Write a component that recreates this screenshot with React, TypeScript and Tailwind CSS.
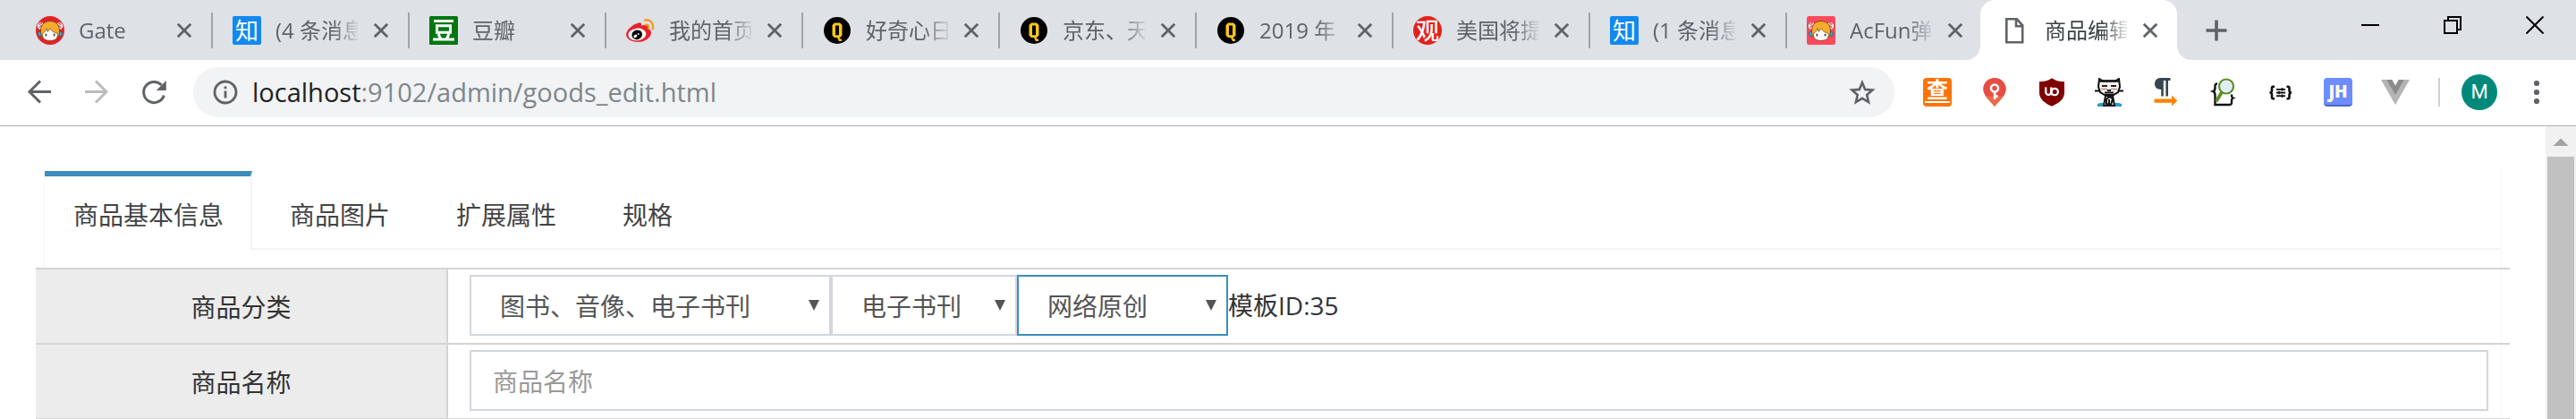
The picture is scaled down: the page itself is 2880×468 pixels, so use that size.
import { useState } from 'react';
import type { ReactNode } from 'react';

function Mascot({ round }: { round?: boolean }) {
  return (
    <svg viewBox="0 0 32 32" className="size-8" aria-hidden="true">
      {round ? <circle cx="16" cy="16" r="16" fill="#e32226" /> : <rect width="32" height="32" rx="2.5" fill="#fb4a5c" />}
      <circle cx="5.5" cy="11" r="4.2" fill="#fff" stroke="#9b3b3b" strokeWidth=".8" />
      <circle cx="26.5" cy="11" r="4.2" fill="#fff" stroke="#9b3b3b" strokeWidth=".8" />
      <path d="M3.4 9.5l3.4-1.6M3.6 13l3-3M28.6 9.5l-3.4-1.6M28.4 13l-3-3" stroke="#f25468" strokeWidth="1.5" />
      <path d="M2 18.5l3.6-1.5 2.2 4-4 2zM30 18.5L26.4 17l-2.2 4 4 2z" fill="#39a9cf" stroke="#2b5a70" strokeWidth=".7" />
      <path d="M5.6 19C4.6 10.500 9 5.600 16 5.600S27.400 10.500 26.400 19c-.3 2.500-1.500 4-2.400 4.600H8C7 23 5.900 21.500 5.600 19z" fill="#f6ab2c" stroke="#6d4518" strokeWidth=".9" />
      <path d="M7.600 19.500c2-.8 3.800-3.300 4.400-5.700l1.400 3.700 2.400-3.700c1.400 2.500 4.800 5 8.600 5.700.3 5-2 7.800-8.400 7.800s-8.800-2.800-8.400-7.800z" fill="#fff" stroke="#6d4518" strokeWidth=".7" />
      <ellipse cx="11.400" cy="21" rx=".9" ry="1.500" fill="#3a2a22" />
      <ellipse cx="20.600" cy="21" rx=".9" ry="1.500" fill="#3a2a22" />
    </svg>
  );
}

function Zhihu() {
  return <span className="flex size-8 items-center justify-center rounded-xs bg-[#1289ee] text-[26px] leading-8 text-white">知</span>;
}

function Douban() {
  return (
    <svg viewBox="0 0 32 32" className="size-8" aria-hidden="true">
      <rect width="32" height="32" rx="1.500" fill="#007711" />
      <g fill="none" stroke="#fff" strokeWidth="3">
        <path d="M5 5.500h22M4 26h24M8.500 10.700h15v7.600h-15zM10 20l2.500 5M22 20l-2.500 5" />
      </g>
    </svg>
  );
}

function Weibo() {
  return (
    <svg viewBox="0 0 32 32" className="size-8" aria-hidden="true">
      <path d="M13 8c2-1.500 4.600-1 4 2.800 4-1.800 8-1.500 7.400 2.200-.2 1 .1 1.300 1 1.700 3 1.200 3.300 4.400 1.600 7.200C24.800 26 19.500 28.800 13 28.800 6 28.800 0 25.500 0 20.500 0 15.800 8 8.500 13 8z" fill="#e6222d" />
      <ellipse cx="12.400" cy="20.400" rx="10" ry="6.800" fill="#fff" transform="rotate(-6 12.400 20.400)" />
      <ellipse cx="12.200" cy="20.800" rx="5.900" ry="5.300" fill="#000" transform="rotate(-15 12.200 20.800)" />
      <ellipse cx="10.400" cy="22.400" rx="2.100" ry="1.700" fill="#fff" transform="rotate(-30 10.400 22.400)" />
      <circle cx="13.700" cy="20" r=".9" fill="#fff" />
      <path d="M21 4.500c5.500-1.400 10.500 3.500 8.700 10M21.500 9.800c2.500-.7 4.400 1.300 3.700 3.900" fill="none" stroke="#f29a1c" strokeWidth="2.300" strokeLinecap="round" />
    </svg>
  );
}

function Curiosity() {
  return (
    <svg viewBox="0 0 32 32" className="size-8" aria-hidden="true">
      <circle cx="16" cy="16" r="15" fill="#000" />
      <path fillRule="evenodd" fill="#fbc71c" d="M13 7.500h6l2.500 2.500v11.500L19 24h-.6l.8 1.600h1.800V28h-3l-2-4H13l-2.500-2.500V10zM14 10.500v10.700h4V10.500z" />
    </svg>
  );
}

function Seal() {
  return <span className="flex size-8 items-center justify-center rounded-full bg-[#e3211b] text-[26px] leading-8 font-medium text-white">观</span>;
}

function Page() {
  return (
    <svg viewBox="0 0 32 32" className="size-8" aria-hidden="true" fill="none" stroke="#5f6368" strokeWidth="2.600">
      <path d="M5.300 3.300h11.500l6.400 7v19H5.300zM16 3.500v7.700h7" />
    </svg>
  );
}

const tabs: { title: string; icon: ReactNode }[] = [
  { title: 'Gate', icon: <Mascot round /> },
  { title: '(4 条消息', icon: <Zhihu /> },
  { title: '豆瓣', icon: <Douban /> },
  { title: '我的首页', icon: <Weibo /> },
  { title: '好奇心日', icon: <Curiosity /> },
  { title: '京东、天', icon: <Curiosity /> },
  { title: '2019 年', icon: <Curiosity /> },
  { title: '美国将提', icon: <Seal /> },
  { title: '(1 条消息', icon: <Zhihu /> },
  { title: 'AcFun弹', icon: <Mascot /> },
  { title: '商品编辑', icon: <Page /> },
];

function TabStrip() {
  const last = tabs.length - 1;
  return (
    <header className="flex h-[67px] bg-[#dee1e6] pl-[18px]">
      {tabs.map((tab, i) => (
        <div
          key={tab.title}
          className={
            i === last
              ? 'relative -ml-1 flex min-w-0 shrink basis-[220px] items-center rounded-t-2xl bg-white pl-6'
              : 'flex min-w-0 shrink basis-[220px] items-center pl-[22px]'
          }
        >
          {i === last && (
            <>
              <svg viewBox="0 0 16 16" className="absolute bottom-0 -left-4 size-4" aria-hidden="true"><path d="M16 0v16H0A16 16 0 0 0 16 0z" fill="#fff" /></svg>
              <svg viewBox="0 0 16 16" className="absolute -right-4 bottom-0 size-4" aria-hidden="true"><path d="M0 0v16h16A16 16 0 0 1 0 0z" fill="#fff" /></svg>
            </>
          )}
          <button type="button" className="flex min-w-0 items-center gap-4">
            <span className="shrink-0">{tab.icon}</span>
            <span
              className={`w-[92px] min-w-0 overflow-hidden text-left text-[24px] leading-8 whitespace-nowrap [mask-image:linear-gradient(to_right,#000_64px,transparent_96px)] ${
                i === last ? 'text-[#3c4043]' : 'text-[#5f6368]'
              }`}
            >
              {tab.title}
            </span>
          </button>
          <button type="button" aria-label="关闭标签页" className="ml-[18px] shrink-0">
            <svg viewBox="0 0 16 16" className="size-4" stroke="#5f6368" strokeWidth="2.800"><path d="M.8.8l14.400 14.400M15.200.8L.8 15.200" /></svg>
          </button>
          {i < last - 1 && <span className="ml-auto h-10 w-0.5 shrink-0 bg-[#a0a4a9]" />}
        </div>
      ))}
      <button type="button" aria-label="新标签页" className="ml-7 flex w-8 shrink-0 items-center justify-center">
        <svg viewBox="0 0 24 24" className="size-6" stroke="#5f6368" strokeWidth="3.600"><path d="M12 .5v23M.5 12h23" /></svg>
      </button>
      <div className="ml-auto flex h-14 shrink-0">
        <button type="button" aria-label="最小化" className="flex w-[92px] items-center justify-center">
          <svg viewBox="0 0 20 20" className="size-5"><path d="M0 9h20v2H0z" /></svg>
        </button>
        <button type="button" aria-label="还原" className="flex w-[92px] items-center justify-center">
          <svg viewBox="0 0 20 20" className="size-5" fill="none" stroke="#000" strokeWidth="2"><path d="M1 5h14v14H1zM5 5V1h14v14h-4" /></svg>
        </button>
        <button type="button" aria-label="关闭" className="flex w-[92px] items-center justify-center">
          <svg viewBox="0 0 20 20" className="size-5" stroke="#000" strokeWidth="2"><path d="M.5.5l19 19M19.500.5l-19 19" /></svg>
        </button>
      </div>
    </header>
  );
}

function Ext({ label, children }: { label: string; children: ReactNode }) {
  return (
    <button type="button" aria-label={label} className="flex size-8 shrink-0 items-center justify-center">
      {children}
    </button>
  );
}

function Toolbar() {
  return (
    <div className="flex items-center border-b border-[#b1b1b1] bg-white pt-2 pr-7 pb-[9px] pl-7">
      <div className="flex shrink-0 gap-8">
        <Ext label="后退">
          <svg viewBox="0 0 32 32" className="size-8" fill="none" stroke="#5f6368" strokeWidth="3"><path d="M29 15.500H5M17 3.500L5 15.500l12 12" /></svg>
        </Ext>
        <Ext label="前进">
          <svg viewBox="0 0 32 32" className="size-8" fill="none" stroke="#babcbe" strokeWidth="3"><path d="M3 15.500h24M15 3.500l12 12-12 12" /></svg>
        </Ext>
        <Ext label="重新加载">
          <svg viewBox="0 0 32 32" className="size-8"><path d="M27.300 19.500A11.600 11.600 0 1 1 24.500 7.900" fill="none" stroke="#5f6368" strokeWidth="3" /><path d="M29.800 3v11H18.800z" fill="#5f6368" /></svg>
        </Ext>
      </div>
      <div className="ml-7 flex h-14 min-w-0 flex-1 items-center rounded-full bg-[#f1f3f4] pr-[21px] pl-[22px]">
        <svg viewBox="0 0 28 28" className="size-7 shrink-0" aria-hidden="true">
          <circle cx="14" cy="14" r="12" fill="none" stroke="#5f6368" strokeWidth="2.800" />
          <path d="M12.600 12.500h2.800v8h-2.800zM12.600 7.500h2.800v2.800h-2.800z" fill="#5f6368" />
        </svg>
        <p className="ml-4 flex-1 truncate text-[29px] leading-10 text-[#80868b]">
          <span className="text-[#202124]">localhost</span>:9102/admin/goods_edit.html
        </p>
        <button type="button" aria-label="为此网页添加书签" className="shrink-0">
          <svg viewBox="0 0 30 30" className="size-[30px]" fill="none" stroke="#5f6368" strokeWidth="2.600"><path d="M15 4.200l3.200 7.700 8.300.7-6.300 5.400 1.900 8.100L15 21.800l-7.100 4.300 1.900-8.100-6.300-5.400 8.300-.7z" /></svg>
        </button>
      </div>
      <div className="ml-8 flex shrink-0 gap-8">
        <Ext label="查词">
          <span className="flex size-8 flex-col items-center rounded-sm bg-[#ff7400] text-[24px] leading-[26px] font-bold text-white">
            查
            <span className="h-0.5 w-7 bg-white" />
          </span>
        </Ext>
        <Ext label="密钥">
          <svg viewBox="0 0 32 32" className="size-8">
            <path d="M16 0c7.200 0 12.800 5.500 12.800 12.600C28.800 20 21 25.500 16 32 11 25.500 3.200 20 3.200 12.600 3.200 5.500 8.800 0 16 0z" fill="#e84c42" />
            <path d="M6 20.500c2.800 3.800 6.800 7.300 10 11.500 3.200-4.200 7.200-7.700 10-11.500z" fill="#e96a4b" />
            <circle cx="16" cy="11.500" r="4" fill="none" stroke="#fff" strokeWidth="2.600" />
            <path d="M14.800 15h2.600v9h-2.600zM17 19h2.500v3H17z" fill="#fff" />
          </svg>
        </Ext>
        <Ext label="uBlock">
          <svg viewBox="0 0 32 32" className="size-8">
            <path d="M16 .3c4.500 3 9 4 14 4v12C30 24 24 28 16 31.800 8 28 2 24 2 16.300v-12c5 0 9.500-1 14-4z" fill="#800000" />
            <g fill="none" stroke="#fff" strokeWidth="2.300"><path d="M9.200 10.500v5.300a3 3 0 0 0 6 0v-5.300M15.200 15.800v3.500" /><circle cx="19.200" cy="15.500" r="3.700" /></g>
          </svg>
        </Ext>
        <Ext label="猫">
          <svg viewBox="0 0 32 32" className="size-8">
            <path d="M3 29c4-2 22-2 27 0v3H3z" fill="#2c9ccf" />
            <path d="M5 1l4 2.500h14l4-2.500 1 9-2 6-5 3H11l-5-3-2-6z" fill="#f6f2ef" stroke="#111" strokeWidth="2" />
            <path d="M5 3.500h22" stroke="#111" strokeWidth="2.400" />
            <path d="M8 9h6M18 9h6" stroke="#222" strokeWidth="2" />
            <path d="M7 12.500h7M18 12.500h7" stroke="#c88" strokeWidth="1.500" />
            <path d="M0 14.500h6M26 14.500h6M11 16.500h10M14 14h4" stroke="#111" strokeWidth="2" />
            <path d="M12 20l-2 11h12l-2-11z" fill="#fff" stroke="#111" strokeWidth="2" />
            <path d="M13 24l3-3 4 2-2 7-5-1zM16 24v5" fill="none" stroke="#111" strokeWidth="2" />
          </svg>
        </Ext>
        <Ext label="段落">
          <svg viewBox="0 0 32 32" className="size-8">
            <path d="M20.500 0v3H18v17.500h-2.600V3h-2.600v17.500h-2.600V13C5.500 13 3 10.500 3 6.600 3 2.600 5.800 0 10 0z" fill="#37474f" />
            <path d="M2.500 23.600H22v-4L28.300 25.500 22 31.500v-3.700H2.500z" fill="#ff8200" />
          </svg>
        </Ext>
        <Ext label="JSON 查看">
          <svg viewBox="0 0 32 32" className="size-8">
            <path d="M9 6.500c-3 0-2.500 2-2.500 4 0 3-.5 4-2 4.500 1.500.5 2 2 2 5v10h16c3 0 2.500-2 2.500-4 0-2 .2-3 1.500-3.500-1.300-.5-1.500-2-1.500-4" fill="none" stroke="#111" strokeWidth="2.400" />
            <path d="M14 16l-5.500 9" stroke="#5b8f1f" strokeWidth="3.800" strokeLinecap="round" />
            <circle cx="19" cy="9.500" r="8" fill="#e3edfa" stroke="#5c8f23" strokeWidth="2.200" />
          </svg>
        </Ext>
        <Ext label="JSON 编辑">
          <svg viewBox="0 0 32 32" className="size-8" fill="none" stroke="#111" strokeWidth="2.600">
            <path d="M9 9.800H7.500c-1 0-1.500.6-1.500 1.600v2.800c0 1.400-.8 2.300-2.500 2.300C5.200 16.500 6 17.400 6 18.800v2.800c0 1 .5 1.600 1.500 1.600H9M22.500 9.800H24c1 0 1.500.6 1.500 1.600v2.800c0 1.400.8 2.300 2.500 2.300-1.700 0-2.500.9-2.500 2.300v2.800c0 1-.5 1.600-1.500 1.600h-1.500" />
            <path d="M11 12.800h10M11 16.500h10M11 20.200h10" strokeWidth="1.800" />
            <path d="M17.500 11v3.600M14 14.700v3.600M17.500 18.400V22" strokeWidth="1.600" />
          </svg>
        </Ext>
        <Ext label="JSON Handle">
          <span className="flex size-8 items-center justify-center rounded-sm border-b-2 border-[#4a66c4] bg-[#6c8cff] text-[19px] leading-7 font-extrabold text-[#fffbe6]">JH</span>
        </Ext>
        <Ext label="Vue">
          <svg viewBox="0 0 32 32" className="size-8">
            <path d="M0 2h32L16 30z" fill="#b4b4b4" />
            <path d="M6.300 2h19.400L16 19z" fill="#8c8c8c" />
            <path d="M12.300 2h7.400L16 8.400z" fill="#fff" />
          </svg>
        </Ext>
      </div>
      <span className="ml-8 h-8 w-0.5 shrink-0 bg-[#cdcfd2]" />
      <button type="button" className="ml-6 size-10 shrink-0 rounded-full bg-[#00897b] text-center font-[Roboto,sans-serif] text-[22px] leading-10 text-white">M</button>
      <button type="button" aria-label="菜单" className="ml-7 flex h-8 w-8 shrink-0 items-center justify-center">
        <svg viewBox="0 0 32 32" className="size-8" fill="#5f6368"><circle cx="16" cy="6" r="3.100" /><circle cx="16" cy="16" r="3.100" /><circle cx="16" cy="26" r="3.100" /></svg>
      </button>
    </div>
  );
}

function Select({ id, label, option, widthClass, active }: { id: string; label: string; option: string; widthClass: string; active?: boolean }) {
  return (
    <div className={`relative ${widthClass}`}>
      <select
        id={id}
        aria-label={label}
        className={`h-[68px] w-full appearance-none border-2 bg-white pt-0.5 pr-10 pl-8 text-[28px] leading-10 text-[#555] outline-none ${
          active ? 'border-[#3c8dbc]' : 'border-[#d2d6de]'
        }`}
      >
        <option>{option}</option>
      </select>
      <svg viewBox="0 0 12 12" className="pointer-events-none absolute top-7 right-[13px] size-3" fill="#555" aria-hidden="true"><path d="M0 0h12L6 12z" /></svg>
    </div>
  );
}

const sections = ['商品基本信息', '商品图片', '扩展属性', '规格'];

export default function App() {
  const [current, setCurrent] = useState(0);
  const th = 'border-r-2 border-[#d4d4d4] bg-[#ececec] pt-0.5 text-center text-[28px] leading-10 font-normal';
  return (
    <div className="flex min-h-screen flex-col bg-white font-['Open_Sans','Noto_Sans_CJK_SC',sans-serif] text-[#333]">
      <TabStrip />
      <Toolbar />
      <div className="flex flex-1">
        <main className="flex min-w-0 flex-1 flex-col px-[49px] pt-[50px]">
          <div className="flex-1 border-x border-[#f6f6f6]">
            <nav className="mb-5 flex border-b-2 border-[#f4f4f4]">
              {sections.map((name, i) => (
                <button
                  key={name}
                  type="button"
                  onClick={() => setCurrent(i)}
                  className={`mr-2.5 -mb-0.5 border-t-[6px] border-r-2 px-[30px] pt-[23px] pb-[19px] pl-8 text-[28px] leading-10 text-[#444] ${
                    i === current ? 'border-t-[#3c8dbc] border-r-[#f4f4f4] bg-white' : 'border-transparent'
                  }`}
                >
                  {name}
                </button>
              ))}
            </nav>
            <div className="-mx-2.5">
              <table className="w-full table-fixed border-separate border-spacing-0">
                <colgroup>
                  <col className="w-[461px]" />
                  <col />
                </colgroup>
                <tbody>
                  <tr>
                    <th scope="row" className={`${th} border-t-2`}>
                      <label htmlFor="category">商品分类</label>
                    </th>
                    <td className="border-t-2 border-[#d4d4d4] px-6 pt-1.5 pb-2">
                      <div className="flex items-center">
                        <Select id="category" label="一级分类" option="图书、音像、电子书刊" widthClass="w-[404px]" />
                        <Select id="category2" label="二级分类" option="电子书刊" widthClass="w-[208px]" />
                        <Select id="category3" label="三级分类" option="网络原创" widthClass="w-[236px]" active />
                        <span className="text-[28px] leading-10">模板ID:35</span>
                      </div>
                    </td>
                  </tr>
                  <tr>
                    <th scope="row" className={`${th} border-t-2 border-b`}>
                      <label htmlFor="goods-name">商品名称</label>
                    </th>
                    <td className="border-t-2 border-b border-[#d4d4d4] px-6 pt-1.5 pb-2">
                      <input
                        id="goods-name"
                        type="text"
                        placeholder="商品名称"
                        className="block h-[68px] w-full border-2 border-[#d2d6de] bg-white px-6 pt-0.5 text-[28px] leading-10 outline-none placeholder:text-[#999]"
                      />
                    </td>
                  </tr>
                </tbody>
              </table>
            </div>
          </div>
        </main>
        <div className="flex w-[34px] shrink-0 flex-col items-center bg-[#f1f1f1]" aria-hidden="true">
          <svg viewBox="0 0 34 34" className="size-[34px]" fill="#a3a3a3"><path d="M17 13.500l8.500 8.500h-17z" /></svg>
          <div className="w-[30px] flex-1 bg-[#c1c1c1]" />
        </div>
      </div>
    </div>
  );
}
